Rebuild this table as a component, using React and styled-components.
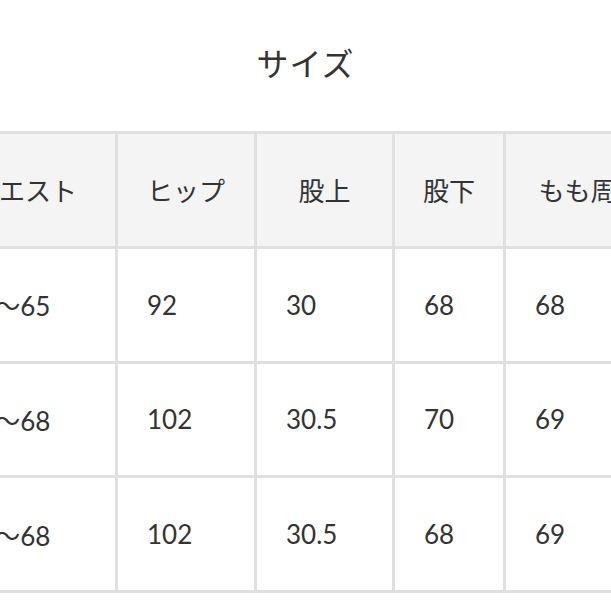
import React from "react";
import styled, { createGlobalStyle } from "styled-components";

const GlobalStyle = createGlobalStyle`
  body {
    margin: 0;
    background: #fff;
    font-family: "Lato", "Noto Sans CJK JP", sans-serif;
    color: #333;
  }
`;

const Page = styled.div`
  width: 611px;
  height: 611px;
  overflow: hidden;
  padding-top: 41px;
  box-sizing: border-box;
`;

const Title = styled.h2`
  margin: 0 0 45px;
  font-size: 32px;
  font-weight: 400;
  line-height: 45px;
  text-align: center;
  letter-spacing: 1px;
`;

const Table = styled.table`
  margin-left: -68px;
  border-collapse: collapse;
  table-layout: fixed;
  width: 881px;
`;

const HeadCell = styled.th`
  width: ${(p) => p.w}px;
  height: 111.75px;
  padding: 0;
  background: #f4f4f4;
  border: 3px solid #e0e0e0;
  font-size: 26px;
  font-weight: 400;
  text-align: center;
  white-space: nowrap;
`;

const Cell = styled.td`
  height: 111.75px;
  padding: 0 0 0 29px;
  border: 3px solid #e0e0e0;
  font-size: 26px;
  white-space: nowrap;
`;

const columns = [
  { label: "ウエスト", w: 180 },
  { label: "ヒップ", w: 136 },
  { label: "股上", w: 135 },
  { label: "股下", w: 108 },
  { label: "もも周り", w: 169 },
  { label: "裾幅", w: 153 },
];

const rows = [
  ["58〜65", "92", "30", "68", "68", "20"],
  ["62〜68", "102", "30.5", "70", "69", "21"],
  ["62〜68", "102", "30.5", "68", "69", "21"],
];

export default function App() {
  return (
    <>
      <GlobalStyle />
      <Page>
        <Title>サイズ</Title>
        <Table>
          <thead>
            <tr>
              {columns.map((c) => (
                <HeadCell key={c.label} w={c.w}>
                  {c.label}
                </HeadCell>
              ))}
            </tr>
          </thead>
          <tbody>
            {rows.map((r, i) => (
              <tr key={i}>
                {r.map((v, j) => (
                  <Cell key={j}>{v}</Cell>
                ))}
              </tr>
            ))}
          </tbody>
        </Table>
      </Page>
    </>
  );
}
